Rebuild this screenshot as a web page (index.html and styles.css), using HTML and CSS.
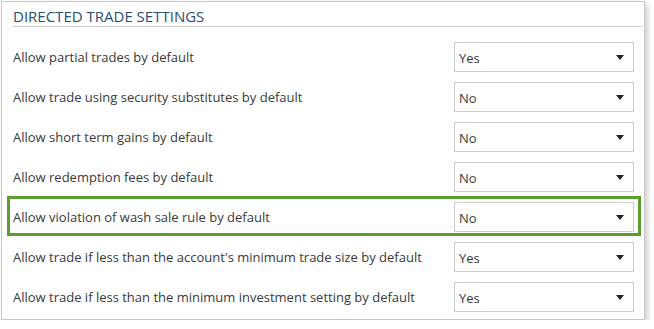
FILE: index.html
```html
<!DOCTYPE html>
<html>
<head>
<meta charset="utf-8">
<link rel="stylesheet" href="styles.css">
</head>
<body>
<div class="panel">
  <div class="heading">DIRECTED TRADE SETTINGS</div>
  <div class="rows">
    <div class="row"><span class="label">Allow partial trades by default</span><div class="select"><span>Yes</span><span class="arrow"></span></div></div>
    <div class="row"><span class="label">Allow trade using security substitutes by default</span><div class="select"><span>No</span><span class="arrow"></span></div></div>
    <div class="row"><span class="label">Allow short term gains by default</span><div class="select"><span>No</span><span class="arrow"></span></div></div>
    <div class="row"><span class="label">Allow redemption fees by default</span><div class="select"><span>No</span><span class="arrow"></span></div></div>
    <div class="row highlight"><span class="label">Allow violation of wash sale rule by default</span><div class="select"><span>No</span><span class="arrow"></span></div></div>
    <div class="row"><span class="label">Allow trade if less than the account's minimum trade size by default</span><div class="select"><span>Yes</span><span class="arrow"></span></div></div>
    <div class="row"><span class="label">Allow trade if less than the minimum investment setting by default</span><div class="select"><span>Yes</span><span class="arrow"></span></div></div>
  </div>
</div>
</body>
</html>
```
FILE: styles.css
```css
html, body {
  margin: 0;
  padding: 0;
  background: #ffffff;
}
body {
  padding: 1px 0 0 1px;
  font-family: "Open Sans", "Noto Sans", sans-serif;
  color: #3a3a3a;
}
.panel {
  width: 642px;
  height: 317px;
  border: 1px solid #c8c8c8;
  background: #fff;
  box-shadow: 3px 3px 5px rgba(0, 0, 0, 0.18);
  display: flex;
  flex-direction: column;
}
.heading {
  margin: 0 2px 0 11px;
  height: 25px;
  box-sizing: border-box;
  padding-top: 6px;
  border-bottom: 1px solid #c8c8c8;
  font-size: 15px;
  line-height: 17px;
  color: #2a4d72;
  font-weight: 400;
}
.rows {
  margin: 9px 3px 0 5px;
  display: flex;
  flex-direction: column;
}
.row {
  height: 40px;
  display: flex;
  align-items: center;
  justify-content: space-between;
  padding: 1px 7px 0 6px;
  box-sizing: border-box;
}
.row.highlight {
  outline: 3px solid #5a9e2e;
  outline-offset: -3px;
}
.label {
  font-size: 13px;
  color: #3a3a3a;
}
.select {
  width: 180px;
  height: 30px;
  box-sizing: border-box;
  border: 1px solid #cccccc;
  display: flex;
  align-items: center;
  justify-content: space-between;
  padding: 2px 9px 0 4px;
  font-size: 13px;
  color: #3a3a3a;
}
.arrow {
  width: 0;
  height: 0;
  border-left: 4px solid transparent;
  border-right: 4px solid transparent;
  border-top: 5px solid #222;
}
```
